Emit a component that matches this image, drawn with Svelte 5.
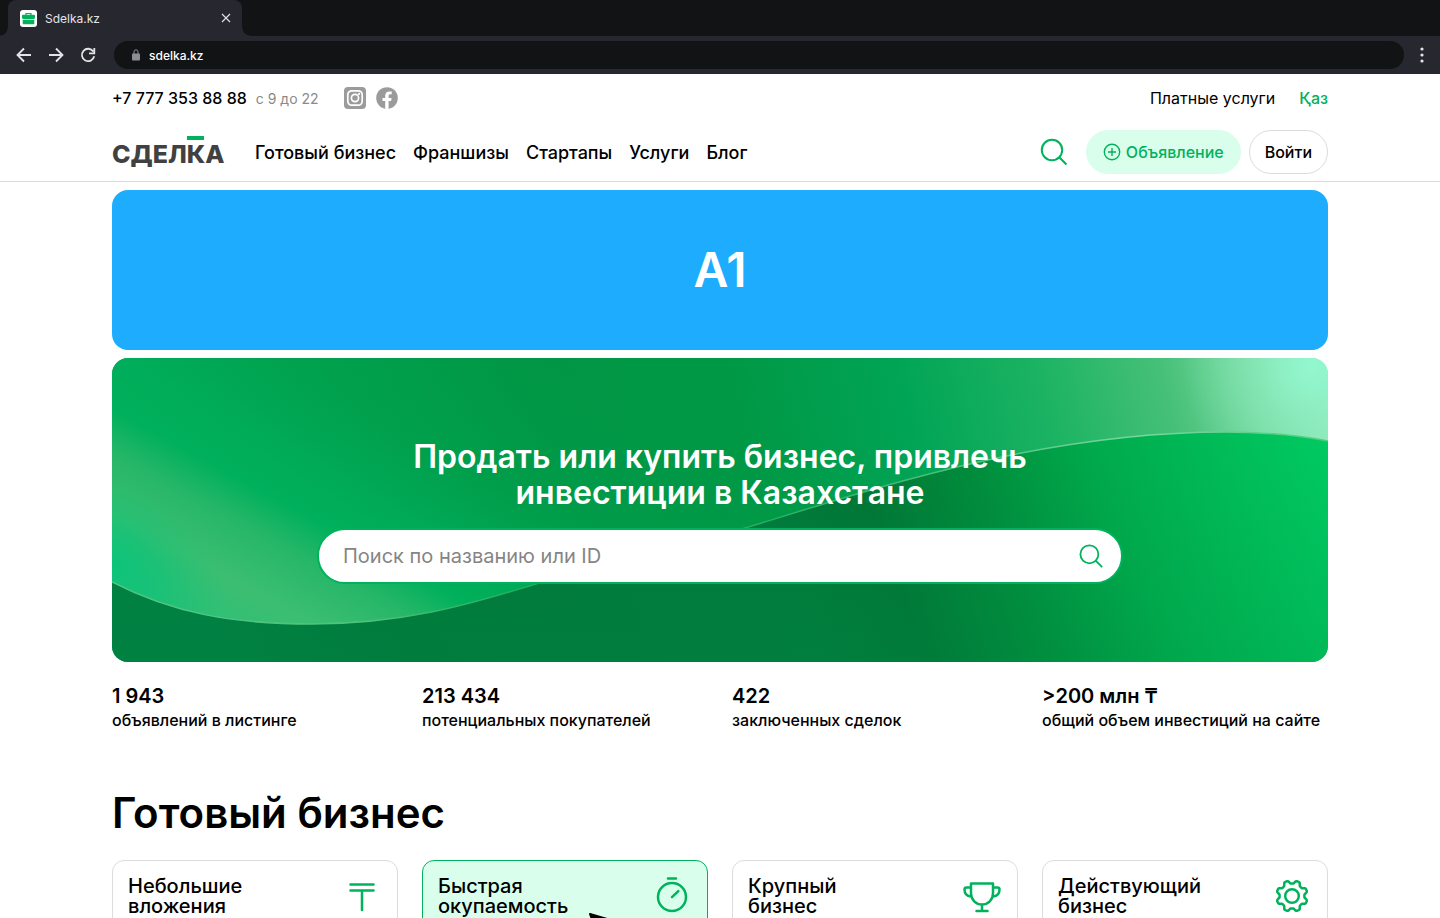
<script>
  const nav = ['Готовый бизнес', 'Франшизы', 'Стартапы', 'Услуги', 'Блог'];
  const stats = [
    { value: '1 943', label: 'объявлений в листинге' },
    { value: '213 434', label: 'потенциальных покупателей' },
    { value: '422', label: 'заключенных сделок' },
    { value: '>200 млн ₸', label: 'общий объем инвестиций на сайте' }
  ];
  const cards = [
    { lines: ['Небольшие', 'вложения'], icon: 'tenge' },
    { lines: ['Быстрая', 'окупаемость'], icon: 'timer', active: true },
    { lines: ['Крупный', 'бизнес'], icon: 'cup' },
    { lines: ['Действующий', 'бизнес'], icon: 'gear' }
  ];

  // Eight-lobed gear outline, sampled around the circle
  const gear = Array.from({ length: 96 }, (_, i) => {
    const a = (i / 96) * Math.PI * 2;
    const w = Math.cos(8 * (a - Math.PI / 8));
    const r = 14 + 1.6 * Math.tanh(2.2 * w) / Math.tanh(2.2);
    return `${(20 + r * Math.cos(a)).toFixed(2)} ${(20 + r * Math.sin(a)).toFixed(2)}`;
  }).join('L');

  let query = $state('');
</script>

<div class="window">
  <div class="tabs">
    <div class="tab">
      <svg class="favicon" viewBox="0 0 17 17" aria-hidden="true">
        <rect width="17" height="17" rx="3" fill="#fff" />
        <path d="M6 5V3.5h5V5" fill="none" stroke="#00b25c" stroke-width="1.2" />
        <path d="M3 4.8h11a1 1 0 0 1 1 1v2.4l-2 1H4l-2-1V5.800a1 1 0 0 1 1-1z" fill="#00b25c" />
        <path d="M2.700 9.600l1.300.5h9l1.300-.5v4a.7.7 0 0 1-.7.7H3.400a.7.7 0 0 1-.7-.7z" fill="#00b25c" />
      </svg>
      <span>Sdelka.kz</span>
      <button class="plain close" aria-label="Закрыть вкладку">
        <svg width="10" height="10" viewBox="0 0 10 10"><path d="M1 1l8 8M9 1l-8 8" stroke="#e4e4e8" stroke-width="1.1" /></svg>
      </button>
    </div>
  </div>
  <div class="toolbar">
    <button class="plain" aria-label="Назад">
      <svg width="16" height="16" viewBox="0 0 16 16"><path d="M15 8H2M8 1.500L1.500 8 8 14.500" /></svg>
    </button>
    <button class="plain" aria-label="Вперёд">
      <svg width="16" height="16" viewBox="0 0 16 16"><path d="M1 8h13M8 1.500L14.500 8 8 14.500" /></svg>
    </button>
    <button class="plain" aria-label="Обновить">
      <svg width="16" height="16" viewBox="0 0 16 16"><path d="M13.300 4.500A6.200 6.200 0 1 0 14.200 9.300M14.300 1v5.300H9" /></svg>
    </button>
    <div class="address">
      <svg width="8" height="12" viewBox="0 0 8 12" aria-hidden="true">
        <rect y="4.500" width="8" height="7" rx="1" fill="#8e8e92" />
        <path d="M2 5V2.800a2 2 0 0 1 4 0V5" fill="none" stroke="#8e8e92" />
      </svg>
      <span>sdelka.kz</span>
    </div>
    <button class="plain menu" aria-label="Меню">
      <svg width="4" height="16" viewBox="0 0 4 16"><g fill="#e4e4e8" stroke="none"><circle cx="2" cy="2" r="1.600" /><circle cx="2" cy="8" r="1.600" /><circle cx="2" cy="14" r="1.600" /></g></svg>
    </button>
  </div>

  <div class="site">
    <header>
      <div class="wrap top">
        <a class="phone" href="tel:+77773538888">+7 777 353 88 88</a>
        <span class="hours">с 9 до 22</span>
        <a class="social" href="#instagram" aria-label="Instagram">
          <svg width="22" height="22" viewBox="0 0 22 22">
            <rect width="22" height="22" rx="4" fill="#9b9b9b" />
            <g fill="none" stroke="#fff" stroke-width="1.700"><rect x="3.800" y="3.800" width="14.400" height="14.400" rx="4" /><circle cx="11" cy="11" r="3.600" /></g>
            <circle cx="15.100" cy="6.900" r="1.100" fill="#fff" />
          </svg>
        </a>
        <a class="social" href="#facebook" aria-label="Facebook">
          <svg width="22" height="22" viewBox="0 0 22 22">
            <circle cx="11" cy="11" r="10.800" fill="#9b9b9b" />
            <path d="M9.200 22v-7.900H6.500V11h2.700V8.700c0-2.800 1.600-4.300 4.100-4.300 1.200 0 2.400.2 2.400.2v2.700h-1.400c-1.300 0-1.700.8-1.700 1.700v2h3l-.5 3.100h-2.500V22z" fill="#fff" />
          </svg>
        </a>
        <a class="paid" href="#paid">Платные услуги</a>
        <a class="lang" href="#kk">Қаз</a>
      </div>
      <div class="wrap main">
        <a class="logo" href="#home">СДЕЛКА</a>
        <nav>
          {#each nav as item}<a href="#section">{item}</a>{/each}
        </nav>
        <button class="plain find" aria-label="Поиск">
          <svg width="28" height="28" viewBox="0 0 28 28" fill="none" stroke="#00b25c" stroke-width="2"><circle cx="12" cy="12" r="10.200" /><path d="M19.200 19.200l7.300 7.300" /></svg>
        </button>
        <button class="pill add">
          <svg width="18" height="18" viewBox="0 0 18 18" fill="none" stroke="#00b25c" stroke-width="1.400" aria-hidden="true"><circle cx="9" cy="9" r="7.700" /><path d="M9 5v8M5 9h8" /></svg>
          Объявление
        </button>
        <button class="pill login">Войти</button>
      </div>
    </header>

    <main class="wrap">
      <div class="banner">A1</div>

      <section class="hero">
        <svg class="waves" viewBox="0 0 1216 304" preserveAspectRatio="none" aria-hidden="true">
          <defs>
            <linearGradient id="up" x1="0" y1="0" x2="1144" y2="-286" gradientUnits="userSpaceOnUse">
              <stop offset="0" stop-color="#00b263" /><stop offset=".14" stop-color="#00a350" /><stop offset=".34" stop-color="#009645" /><stop offset=".5" stop-color="#009845" /><stop offset=".64" stop-color="#00a455" /><stop offset=".76" stop-color="#1cb363" /><stop offset=".86" stop-color="#46c078" /><stop offset=".93" stop-color="#74d69c" /><stop offset="1" stop-color="#92ebbd" />
            </linearGradient>
            <linearGradient id="glow" x1="0" y1="224" x2="202" y2="-146" gradientUnits="userSpaceOnUse">
              <stop offset="0" stop-color="#2cc077" /><stop offset=".14" stop-color="#3cbe72" /><stop offset=".27" stop-color="#26b668" /><stop offset=".36" stop-color="#00b05c" /><stop offset=".48" stop-color="#00ac58" stop-opacity=".8" /><stop offset=".65" stop-color="#00a24e" stop-opacity=".5" /><stop offset="1" stop-color="#009a48" stop-opacity="0" />
            </linearGradient>
            <radialGradient id="edge" gradientUnits="userSpaceOnUse" cx="0" cy="0" r="1" gradientTransform="translate(0 205) rotate(35) scale(130 80)">
              <stop offset="0" stop-color="#0cc47a" /><stop offset=".4" stop-color="#10c277" stop-opacity=".7" /><stop offset="1" stop-color="#1cc073" stop-opacity="0" />
            </radialGradient>
            <radialGradient id="mint" gradientUnits="userSpaceOnUse" cx="1200" cy="8" r="130">
              <stop offset="0" stop-color="#92f8d0" /><stop offset=".4" stop-color="#92f4cb" stop-opacity=".5" /><stop offset="1" stop-color="#92f0c4" stop-opacity="0" />
            </radialGradient>
            <linearGradient id="low" x1="0" y1="0" x2="1017" y2="-407" gradientUnits="userSpaceOnUse">
              <stop offset="0" stop-color="#007d40" /><stop offset=".15" stop-color="#00783a" /><stop offset=".5" stop-color="#007a3a" /><stop offset=".59" stop-color="#007636" /><stop offset=".69" stop-color="#008c3c" /><stop offset=".8" stop-color="#00aa4c" /><stop offset="1" stop-color="#00ca62" />
            </linearGradient>
            <linearGradient id="floor" x1="0" y1="100" x2="0" y2="304" gradientUnits="userSpaceOnUse">
              <stop offset="0" stop-color="#009a50" stop-opacity="0" /><stop offset="1" stop-color="#009a50" stop-opacity=".15" />
            </linearGradient>
            <linearGradient id="rim" x1="0" y1="0" x2="1216" y2="0" gradientUnits="userSpaceOnUse">
              <stop offset="0" stop-color="#4fc584" /><stop offset=".2" stop-color="#4fc37c" /><stop offset=".4" stop-color="#0aa653" /><stop offset=".62" stop-color="#3db571" /><stop offset=".85" stop-color="#74d99c" /><stop offset="1" stop-color="#52cb80" />
            </linearGradient>
          </defs>
          <rect width="1216" height="304" fill="url(#up)" />
          <rect width="1216" height="304" fill="url(#glow)" />
          <rect width="1216" height="304" fill="url(#edge)" />
          <rect width="1216" height="304" fill="url(#mint)" />
          <path d="M0 224C60 255 120 266 200 266C300 266 370 242 424 226C500 202 570 190 633 170C740 138 920 74 1113 74C1150 74 1185 77 1216 83V304H0z" fill="url(#low)" />
          <path d="M0 224C60 255 120 266 200 266C300 266 370 242 424 226C500 202 570 190 633 170C740 138 920 74 1113 74C1150 74 1185 77 1216 83V304H0z" fill="url(#floor)" />
          <path d="M0 224C60 255 120 266 200 266C300 266 370 242 424 226C500 202 570 190 633 170C740 138 920 74 1113 74C1150 74 1185 77 1216 83" fill="none" stroke="url(#rim)" stroke-width="1.500" />
        </svg>
        <h1>Продать или купить бизнес, привлечь<br />инвестиции в Казахстане</h1>
        <form class="search" onsubmit={(e) => e.preventDefault()}>
          <input type="text" bind:value={query} placeholder="Поиск по названию или ID" aria-label="Поиск по названию или ID" />
          <button class="plain" aria-label="Найти">
            <svg width="24" height="24" viewBox="0 0 24 24" fill="none" stroke="#00b25c" stroke-width="1.800"><circle cx="10.400" cy="10.300" r="9" /><path d="M16.900 16.800l6.300 6.300" /></svg>
          </button>
        </form>
      </section>

      <dl class="grid stats">
        {#each stats as s}
          <div><dt>{s.value}</dt><dd>{s.label}</dd></div>
        {/each}
      </dl>

      <h2>Готовый бизнес</h2>
      <div class="grid">
        {#each cards as c}
          <a class="card" class:active={c.active} href="#category">
            <span>{c.lines[0]}<br />{c.lines[1]}</span>
            <svg width="40" height="40" viewBox="0 0 40 40" fill="none" stroke="#00b25c" stroke-width="2.500" stroke-linecap="round" stroke-linejoin="round" aria-hidden="true">
              {#if c.icon === 'tenge'}
                <path d="M8.500 8.500h23M8.500 14.500h23M20 14.500v19.500" />
              {:else if c.icon === 'timer'}
                <circle cx="20" cy="21" r="14" /><path d="M16 2.500h8M20 21.200l6.300-6" />
              {:else if c.icon === 'cup'}
                <path d="M9 7.500h22v10a11 11 0 0 1-22 0zM9 11.500H4.500q-2 0-2 2c0 4 2 6.500 6.500 7M31 11.500h4.500q2 0 2 2c0 4-2 6.500-6.500 7M20 29v6M14.500 35h11" />
              {:else}
                <path d={`M${gear}z`} /><circle cx="20" cy="20" r="6.800" />
              {/if}
            </svg>
            {#if c.active}
              <svg class="pointer" width="34" height="34" viewBox="0 0 34 34" aria-hidden="true"><path d="M1 1l31 9-14 6-6 15z" stroke="#000" stroke-width="2" stroke-linejoin="round" /></svg>
            {/if}
          </a>
        {/each}
      </div>
    </main>
  </div>
</div>

<style>
  :global(body) { margin: 0; background: #fff; }
  .window, .window :global(*) { box-sizing: border-box; }
  .window {
    height: 100vh;
    display: flex;
    flex-direction: column;
    overflow: hidden;
    font-family: Inter, sans-serif;
    color: #000;
  }
  a { color: inherit; text-decoration: none; }
  svg { display: block; flex: none; }
  button { font: inherit; cursor: pointer; }
  .plain { padding: 0; border: 0; background: none; display: flex; }

  .tabs { flex: none; height: 36px; padding: 0 8px; background: #121315; }
  .tab {
    position: relative;
    width: 234px;
    height: 36px;
    padding: 0 11px 0 12px;
    display: flex;
    align-items: center;
    gap: 8px;
    border-radius: 8px 8px 0 0;
    background: #27272f;
    color: #e4e4e8;
    font-size: 12px;
  }
  .tab::before, .tab::after {
    content: '';
    position: absolute;
    bottom: 0;
    width: 8px;
    height: 8px;
  }
  .tab::before { left: -8px; background: radial-gradient(circle at 0 0, #121315 7px, #27272f 8px); }
  .tab::after { right: -8px; background: radial-gradient(circle at 100% 0, #121315 7px, #27272f 8px); }
  .favicon { width: 17px; height: 17px; }
  .close { margin-left: auto; }
  .toolbar {
    flex: none;
    height: 38px;
    padding: 0 16px;
    display: flex;
    align-items: center;
    gap: 16px;
    background: #27272f;
  }
  .toolbar > button svg { fill: none; stroke: #e4e4e8; stroke-width: 1.8; }
  .address {
    flex: 1;
    height: 28px;
    margin-left: 2px;
    padding: 0 18px;
    display: flex;
    align-items: center;
    gap: 9px;
    border-radius: 14px;
    background: #121315;
    color: #fff;
    font-size: 12px;
    font-weight: 500;
  }

  .site { flex: 1; min-height: 0; overflow: hidden; }
  .wrap { max-width: 1216px; margin: 0 auto; }
  header { border-bottom: 1px solid #dcdcdc; }
  .top { height: 48px; display: flex; align-items: center; font-size: 16px; }
  .phone { font-weight: 500; }
  .hours { margin: 0 25px 0 9px; color: #8a8a8a; font-size: 14px; }
  .social { margin-right: 10px; }
  .paid { margin-left: auto; }
  .lang { margin-left: 24px; color: #00b25c; font-weight: 500; }
  .main { padding: 8px 0 7px; display: flex; align-items: center; }
  .logo {
    position: relative;
    width: 111px;
    padding-top: 4px;
    color: #414141;
    font-size: 25px;
    line-height: 28px;
    font-weight: 800;
  }
  .logo::after {
    content: '';
    position: absolute;
    top: 0;
    left: 75px;
    width: 17px;
    height: 4px;
    background: #00b25c;
  }
  nav { margin-left: 32px; display: flex; gap: 17px; font-size: 18px; font-weight: 500; }
  .find { margin: 0 18px 0 auto; }
  .pill {
    height: 44px;
    padding: 0 16px;
    display: flex;
    align-items: center;
    gap: 5px;
    border: 1px solid #d9ffec;
    border-radius: 22px;
    font-size: 16px;
    font-weight: 500;
  }
  .add { background: #d9ffec; color: #00b25c; }
  .login { margin-left: 8px; padding: 0 15px; border-color: #dcdcdc; background: #fff; color: #000; }

  .banner {
    height: 160px;
    margin-top: 8px;
    padding-bottom: 2px;
    display: flex;
    align-items: center;
    justify-content: center;
    border-radius: 16px;
    background: #1eacff;
    color: #fff;
    font-size: 48px;
    font-weight: 600;
  }
  .hero {
    position: relative;
    margin-top: 8px;
    padding: 81px 16px 78px;
    display: flex;
    flex-direction: column;
    align-items: center;
    gap: 17px;
    border-radius: 16px;
    overflow: hidden;
  }
  .waves { position: absolute; inset: 0; width: 100%; height: 100%; }
  h1 {
    position: relative;
    margin: 0;
    color: #fff;
    font-size: 32px;
    line-height: 36px;
    font-weight: 600;
    text-align: center;
  }
  .search {
    position: relative;
    width: 100%;
    max-width: 806px;
    height: 56px;
    padding: 0 18px 0 24px;
    display: flex;
    align-items: center;
    border: 2px solid #00b25c;
    border-radius: 28px;
    background: #fff;
  }
  .search input {
    flex: 1;
    min-width: 0;
    padding: 0;
    border: 0;
    outline: 0;
    background: none;
    font: 400 20px Inter, sans-serif;
  }
  .search input::placeholder { color: #858585; opacity: 1; }

  .grid { display: grid; grid-template-columns: repeat(4, 1fr); gap: 24px; }
  .stats { margin: 22px 0 0; }
  dt { font-size: 20px; line-height: 24px; font-weight: 600; }
  dd { margin: 0; font-size: 16px; line-height: 24px; font-weight: 500; white-space: nowrap; }
  h2 { margin: 57px 0 23px; font-size: 42px; line-height: 48px; font-weight: 600; }
  .card {
    position: relative;
    height: 120px;
    padding: 15px;
    display: flex;
    justify-content: space-between;
    border: 1px solid #dcdcdc;
    border-radius: 12px;
    font-size: 20px;
    line-height: 20px;
    font-weight: 500;
  }
  .active { border-color: #00b25c; background: #d9ffec; }
  .pointer { position: absolute; top: 52px; left: 166px; }
</style>
